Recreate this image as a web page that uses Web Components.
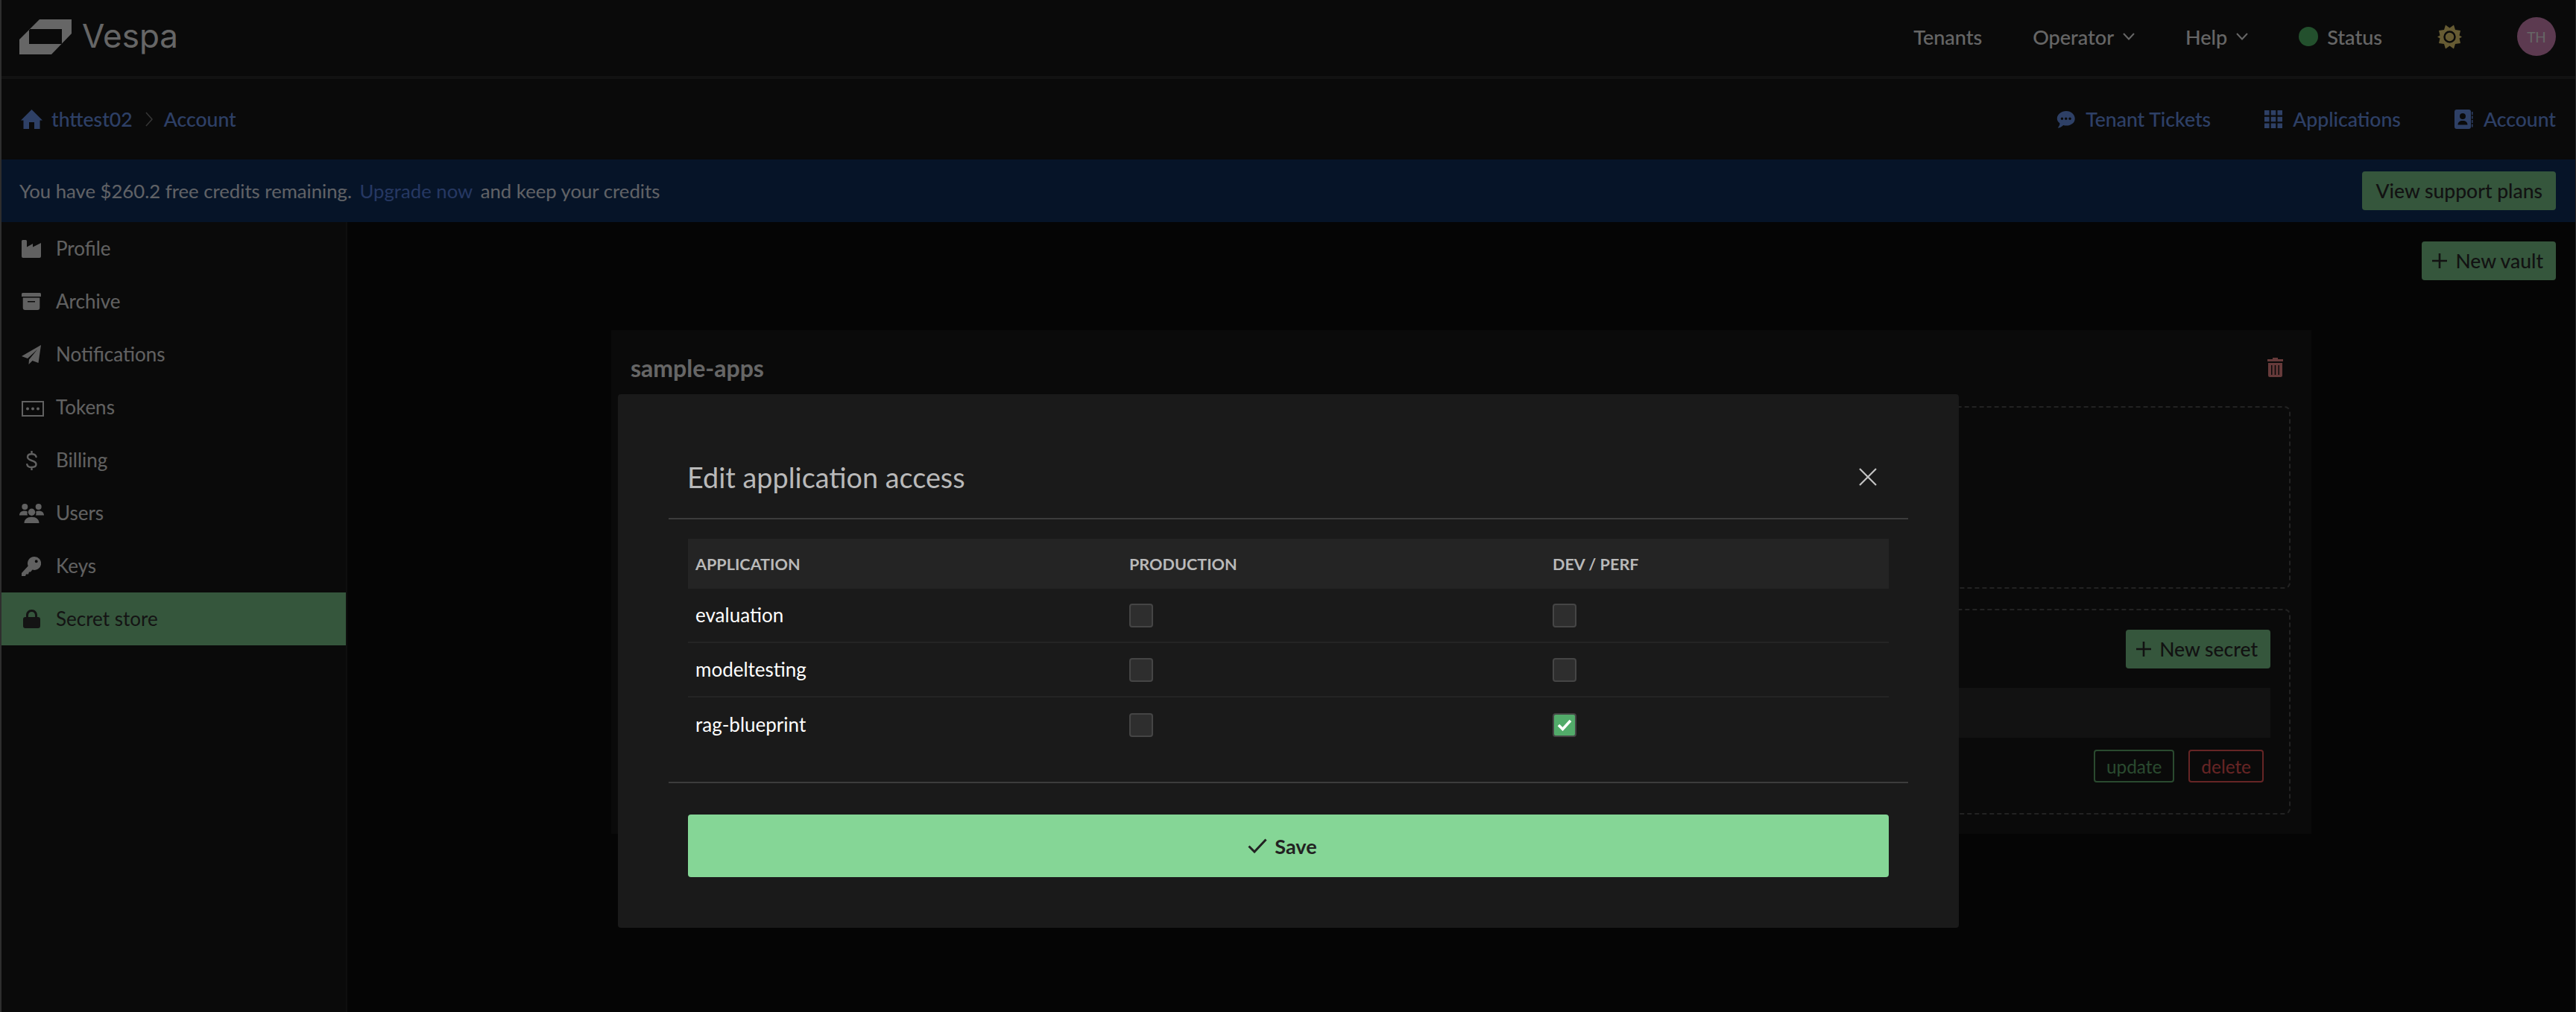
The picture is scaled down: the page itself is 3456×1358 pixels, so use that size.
<!DOCTYPE html>
<html lang="en">
<head>
<meta charset="UTF-8">
<title>Vespa Console - Secret store</title>
<style>
  html, body { margin: 0; height: 100%; background: #0d0d0d; }
  body { font-family: "Lato", "Liberation Sans", sans-serif; font-size: 26px; color: #fff; overflow: hidden; }
</style>
<script>
  const ICONS = {
    logo: { box: '0 0 70 47', svg: '<path fill-rule="evenodd" d="M27 0H70V19L43 47H0V27ZM13 13V33H57V13Z"/>' },
    chevron: { box: '0 0 16 10', svg: '<path d="M1 1L8 8.500L15 1" fill="none" stroke="currentColor" stroke-width="2"/>' },
    crumb: { box: '0 0 10 20', svg: '<path d="M1 1L9 10L1 19" fill="none" stroke="currentColor" stroke-width="1.500"/>' },
    sun: { box: '0 0 33 33', svg: '<path d="M11 0.500L16.500 4.500L22 0.500L24 7L31 8L29.500 14.500L33 16.500L29.500 18.500L31 25L24 26L22 32.500L16.500 28.500L11 32.500L9 26L2 25L3.500 18.500L0 16.500L3.500 14.500L2 8L9 7Z"/><circle cx="16.500" cy="16.500" r="7" fill="none" stroke="#1a1a1a" stroke-width="2.500"/>' },
    home: { box: '0 0 29 26', svg: '<path d="M14.500 0L29 14.500H25.500V26H18V17H11V26H3.500V14.500H0Z"/>' },
    chat: { box: '0 0 27 26', w: 25.5, h: 23, svg: '<path fill-rule="evenodd" d="M14 0C21 0 27 5 27 11.500C27 18 21 22 14 22C12.500 22 11 21.800 9.500 21.400C7 24 3.500 25.500 1 25.500C3 23.500 4.300 21 4 18.500C1.500 16.500 0 14 0 11.500C0 5 6.500 0 14 0ZM7.500 9.500A2 2 0 1 0 7.500 13.500A2 2 0 1 0 7.500 9.500ZM13.500 9.500A2 2 0 1 0 13.500 13.500A2 2 0 1 0 13.500 9.500ZM19.500 9.500A2 2 0 1 0 19.500 13.500A2 2 0 1 0 19.500 9.500Z"/>' },
    grid: { box: '0 0 24 24', svg: '<path d="M0 0H6.500V6.500H0ZM8.750 0H15.250V6.500H8.750ZM17.500 0H24V6.500H17.500ZM0 8.750H6.500V15.250H0ZM8.750 8.750H15.250V15.250H8.750ZM17.500 8.750H24V15.250H17.500ZM0 17.500H6.500V24H0ZM8.750 17.500H15.250V24H8.750ZM17.500 17.500H24V24H17.500Z"/>' },
    contact: { box: '0 0 25 26', svg: '<path fill-rule="evenodd" d="M3 0H19Q22 0 22 3V23Q22 26 19 26H3Q0 26 0 23V3Q0 0 3 0ZM11 5A4 4 0 1 0 11 13A4 4 0 1 0 11 5ZM4.500 20.500H17.500C17.500 17 15 15 11 15C7 15 4.500 17 4.500 20.500Z"/><path d="M23 3H24.500V7H23ZM23 8.500H24.500V12.500H23ZM23 14H24.500V18H23ZM23 19.500H24.500V23.500H23Z"/>' },
    industry: { box: '0 0 26 24', svg: '<path d="M0 1.500Q0 0 1.500 0H5.500Q7 0 7 1.500V9.500L15 5V9.500L26 4V22Q26 24 24 24H2Q0 24 0 22Z"/>' },
    archive: { box: '0 0 26 23', svg: '<path fill-rule="evenodd" d="M1.500 0H24.500Q26 0 26 1.500V5H0V1.500Q0 0 1.500 0ZM1.700 6.500H24.300V20Q24.300 23 21.300 23H4.700Q1.700 23 1.700 20ZM8 11V12.500H18V11Z"/>' },
    plane: { box: '0 0 26 26', svg: '<path d="M26 0L0 15L8 18L21 6L10 19.500L9.500 26L14.500 21L22.500 24Z"/>' },
    token: { box: '0 0 34 24', svg: '<rect x="5" y="4" width="28" height="19" fill="none" stroke="currentColor" stroke-width="2"/><circle cx="12" cy="13.500" r="2"/><circle cx="19" cy="13.500" r="2"/><circle cx="26" cy="13.500" r="2"/>' },
    dollar: { box: '0 0 15 26', svg: '<path d="M13.500 8C13 5.500 10.800 4.200 7.500 4.200C4.200 4.200 2 5.700 2 8.300C2 11 4.500 12 7.500 13C10.800 14 13.500 15 13.500 18C13.500 20.700 11 22 7.500 22C4 22 1.800 20.700 1.300 18.200M7.500 0.500V4M7.500 22V25.500" fill="none" stroke="currentColor" stroke-width="2.400" stroke-linecap="round"/>' },
    users: { box: '0 0 33 26', svg: '<circle cx="7.300" cy="4" r="4"/><circle cx="25.700" cy="4" r="4"/><circle cx="16.500" cy="11.300" r="4.700"/><path d="M0 15.500C0 11.500 3 9.500 7 9.500C8.500 9.500 9.800 9.800 10.800 10.500C10.300 12.500 10.500 14.200 11 15.500ZM33 15.500C33 11.500 30 9.500 26 9.500C24.500 9.500 23.200 9.800 22.200 10.500C22.700 12.500 22.500 14.200 22 15.500ZM6.500 26C6.500 21 10.500 17.800 16.500 17.800C22.500 17.800 26.500 21 26.500 26Z"/>' },
    key: { box: '0 0 26 26', svg: '<path fill-rule="evenodd" d="M17 0A9 9 0 1 1 14.500 17.600L12 20.500H10L9 23.500H6L5 26H0V22L8.700 12.500A9 9 0 0 1 17 0ZM19.700 4.300A2 2 0 1 0 19.700 8.300A2 2 0 1 0 19.700 4.300Z"/>' },
    lock: { box: '0 0 23 25', svg: '<path fill-rule="evenodd" d="M11.500 0C16 0 19 3.300 19 7.500V10H20Q23 10 23 13V22Q23 25 20 25H3Q0 25 0 22V13Q0 10 3 10H4V7.500C4 3.300 7 0 11.500 0ZM11.500 3C8.800 3 7 5 7 7.500V10H16V7.500C16 5 14.200 3 11.500 3Z"/>' },
    plus: { box: '0 0 20 20', svg: '<path d="M10 0V20M0 10H20" fill="none" stroke="currentColor" stroke-width="2.600"/>' },
    trash: { box: '0 0 21 26', svg: '<path fill-rule="evenodd" d="M7 0H14V2H21V5H0V2H7ZM1 7H20V23.500Q20 26 17.500 26H3.500Q1 26 1 23.500ZM5 10V23H6.500V10ZM9.700 10V23H11.300V10ZM14.500 10V23H16V10Z"/>' },
    close: { box: '0 0 24 24', svg: '<path d="M1 1L23 23M23 1L1 23" fill="none" stroke="currentColor" stroke-width="2.200"/>' },
    check: { box: '0 0 26 20', svg: '<path d="M1.500 10.500L9 18L24.500 1.500" fill="none" stroke="currentColor" stroke-width="3"/>' },
    tick: { box: '0 0 20 16', svg: '<path d="M2 8L7.500 13.500L18 2" fill="none" stroke="currentColor" stroke-width="3.600"/>' }
  };

  class VespaElement extends HTMLElement {
    connectedCallback() {
      if (this.shadowRoot) return;
      this.attachShadow({ mode: 'open' });
      this.shadowRoot.innerHTML = `<style>${this.constructor.css}</style>${this.render()}`;
    }
    render() { return '<slot></slot>'; }
  }

  class VIcon extends VespaElement {
    static css = `:host { display: inline-flex; flex: none; fill: currentColor; } svg { display: block; width: 100%; height: 100%; }`;
    render() {
      const icon = ICONS[this.getAttribute('name')];
      const [, , w, h] = icon.box.split(' ');
      this.style.width = (icon.w || w) + 'px';
      this.style.height = (icon.h || h) + 'px';
      return `<svg viewBox="${icon.box}" xmlns="http://www.w3.org/2000/svg">${icon.svg}</svg>`;
    }
  }

  class VApp extends VespaElement {
    static css = `
      :host { display: flex; flex-direction: column; box-sizing: border-box; position: relative; height: 100vh; border-left: 2px solid #2e2e2e; border-right: 1px solid #262626; overflow: hidden; }
      .body { display: flex; flex: 1; min-height: 0; }`;
    render() {
      return `<slot name="top"></slot><div class="body"><slot name="side"></slot><slot name="main"></slot></div><slot name="over"></slot>`;
    }
  }

  class VHeader extends VespaElement {
    static css = `
      :host { display: flex; align-items: center; justify-content: space-between; box-sizing: border-box; height: 106px; padding: 0 26px 4px 24px; background: #1a1a1a; border-bottom: 4px solid #2d2d2d; }
      .brand { display: flex; align-items: center; gap: 14px; color: #ffffff; }
      .name { font: 400 44px/1 "Inter", "Liberation Sans", sans-serif; color: #ffffff; margin-top: -3px; }
      .nav { display: flex; align-items: center; gap: 68px; font-size: 27px; }`;
    render() {
      return `<div class="brand"><v-icon name="logo"></v-icon><span class="name">Vespa</span></div><div class="nav"><slot></slot></div>`;
    }
  }

  class VTopLink extends VespaElement {
    static css = `
      :host { display: inline-flex; align-items: center; gap: 12px; font-weight: 500; color: #fff; }
      :host([bare]) { margin-left: 6px; }`;
  }

  class VStatusDot extends VespaElement {
    static css = `:host { display: block; width: 26px; height: 26px; border-radius: 50%; background: #57c870; }`;
    render() { return ''; }
  }

  class VAvatar extends VespaElement {
    static css = `:host { display: flex; align-items: center; justify-content: center; width: 52px; height: 52px; margin-left: 6px; border-radius: 50%; background: #e691c8; color: #fff; font-size: 19px; font-weight: 400; }`;
  }

  class VSubnav extends VespaElement {
    static css = `
      :host { display: flex; align-items: center; justify-content: space-between; box-sizing: border-box; height: 108px; padding: 0 26px 0 26px; background: #1a1a1a; color: #73a0ff; font-size: 26.600px; }
      .crumbs, .links { display: flex; align-items: center; }
      .links { gap: 72px; }`;
    render() {
      return `<div class="crumbs"><slot name="crumbs"></slot></div><div class="links"><slot></slot></div>`;
    }
  }

  class VSubLink extends VespaElement {
    static css = `:host { display: inline-flex; align-items: center; gap: 14px; color: #73a0ff; font-weight: 500; }`;
  }

  class VBanner extends VespaElement {
    static css = `
      :host { display: flex; align-items: center; justify-content: space-between; box-sizing: border-box; height: 84px; padding: 0 26px 0 24px; background: #0f3264; color: #f0f4ff; font-size: 25.700px; }`;
    render() {
      return `<div><slot></slot></div><slot name="action"></slot>`;
    }
  }

  class VButton extends VespaElement {
    static css = `
      :host { display: inline-flex; align-items: center; justify-content: center; box-sizing: border-box; height: 52px; padding: 0 18px; gap: 11px; border-radius: 4px; background: #85d696; color: #2e2e2e; font-size: 26.500px; font-weight: 500; white-space: nowrap; }
      :host([icon]) { padding: 0 17px 0 14px; }`;
  }

  class VOutlineButton extends VespaElement {
    static css = `
      :host { display: inline-flex; align-items: center; justify-content: center; box-sizing: border-box; height: 44px; padding: 0 15px; border: 2px solid currentColor; border-radius: 4px; font-size: 24.400px; }`;
  }

  class VSidebar extends VespaElement {
    static css = `:host { display: block; box-sizing: border-box; flex: none; width: 464px; background: #1a1a1a; border-right: 2px solid #232323; }`;
  }

  class VSideItem extends VespaElement {
    static css = `
      :host { display: flex; align-items: center; box-sizing: border-box; height: 71px; color: #f2f2f2; }
      :host([active]) { background: #85d696; color: #333; }
      .ico { display: flex; justify-content: center; width: 34px; margin: 0 16px 0 23px; }
      .label { margin-top: -2px; }`;
    render() {
      return `<span class="ico"><v-icon name="${this.getAttribute('icon')}"></v-icon></span><span class="label"><slot></slot></span>`;
    }
  }

  class VMain extends VespaElement {
    static css = `
      :host { display: flex; flex-direction: column; align-items: center; flex: 1; box-sizing: border-box; padding: 26px 26px 0 0; background: #0d0d0d; }
      .tools { display: flex; justify-content: flex-end; align-self: stretch; margin-bottom: 67px; }`;
    render() {
      return `<div class="tools"><slot name="tools"></slot></div><slot></slot>`;
    }
  }

  class VVault extends VespaElement {
    static css = `
      :host { display: block; box-sizing: border-box; width: 2281px; height: 676px; margin-right: -26px; padding: 23px 28px 26px 28px; background: #1a1a1a; }
      .head { display: flex; align-items: center; justify-content: space-between; height: 54px; margin: 0 10px 25px -2px; font-size: 32px; font-weight: 700; color: #fff; }
      .trash { color: #ff9191; }`;
    render() {
      return `<div class="head"><span>${this.getAttribute('name')}</span><v-icon class="trash" name="trash"></v-icon></div><slot></slot>`;
    }
  }

  class VDashed extends VespaElement {
    static css = `:host { display: block; box-sizing: border-box; border: 2px dashed #555; border-radius: 8px; margin-bottom: 27px; }`;
  }

  class VSecretList extends VespaElement {
    static css = `
      :host { display: flex; flex-direction: column; box-sizing: border-box; height: 100%; padding: 26px 25px 0; }
      .bar { display: flex; justify-content: flex-end; height: 52px; margin-bottom: 26px; }
      .thead { height: 67px; background: #2d2d2d; margin-bottom: 16px; }
      .row { display: flex; justify-content: flex-end; gap: 19px; padding-right: 9px; color: #fff; }`;
    render() {
      return `<div class="bar"><slot name="bar"></slot></div><div class="thead"></div><div class="row"><slot></slot></div>`;
    }
  }

  class VOverlay extends VespaElement {
    static css = `:host { position: absolute; inset: 0; display: flex; justify-content: center; background: rgba(0, 0, 0, .6); }`;
  }

  class VModal extends VespaElement {
    static css = `
      :host { display: block; box-sizing: border-box; width: 1799px; height: 716px; margin-top: 529px; padding: 0 68px; background: #1a1a1a; border-radius: 4px; }
      .head { display: flex; align-items: center; justify-content: space-between; box-sizing: border-box; height: 168px; padding: 57px 42px 0 25px; border-bottom: 2px solid #3c3c3c; }
      .title { font-size: 37.800px; font-weight: 400; color: #b9b9b9; }
      .close { color: #c4c4c4; margin-top: -2px; }
      .content { height: 354px; box-sizing: border-box; padding: 26px 26px 0; border-bottom: 2px solid #3c3c3c; }
      .foot { padding: 42px 26px 0; }`;
    render() {
      return `<div class="head"><span class="title">${this.getAttribute('heading')}</span><v-icon class="close" name="close"></v-icon></div>
        <div class="content"><slot></slot></div><div class="foot"><slot name="foot"></slot></div>`;
    }
  }

  class VAccessHead extends VespaElement {
    static css = `
      :host { display: grid; grid-template-columns: 582px 568px 1fr; align-items: center; height: 67px; background: #242424; color: #b9b9b9; font-size: 21.600px; font-weight: 700; }
      ::slotted(span) { padding-left: 10px; }`;
  }

  class VAccessRow extends VespaElement {
    static css = `
      :host { display: grid; grid-template-columns: 582px 568px 1fr; align-items: center; box-sizing: border-box; height: 73px; border-bottom: 2px solid #242424; color: #fff; }
      :host([last]) { border-bottom: none; }
      ::slotted(*) { margin-left: 10px; }
      ::slotted(span) { margin-top: -2px; }`;
  }

  class VCheckbox extends VespaElement {
    static css = `
      :host { display: flex; align-items: center; justify-content: center; box-sizing: border-box; width: 32px; height: 32px; background: #2e2e2e; border: 2px solid #454545; border-radius: 4px; color: #fff; }
      :host([checked]) { background: #52ab6a; }`;
    render() {
      return this.hasAttribute('checked') ? '<v-icon name="tick"></v-icon>' : '';
    }
  }

  class VSaveButton extends VespaElement {
    static css = `
      :host { display: flex; align-items: center; justify-content: center; gap: 10px; box-sizing: border-box; height: 84px; padding-right: 16px; border-radius: 4px; background: #85d696; color: #222; font-size: 27px; font-weight: 700; }`;
    render() {
      return `<v-icon name="check"></v-icon><slot></slot>`;
    }
  }

  const elements = {
    'v-icon': VIcon, 'v-app': VApp, 'v-header': VHeader, 'v-top-link': VTopLink, 'v-status-dot': VStatusDot,
    'v-avatar': VAvatar, 'v-subnav': VSubnav, 'v-sub-link': VSubLink, 'v-banner': VBanner, 'v-button': VButton,
    'v-outline-button': VOutlineButton, 'v-sidebar': VSidebar, 'v-side-item': VSideItem, 'v-main': VMain,
    'v-vault': VVault, 'v-dashed': VDashed, 'v-secret-list': VSecretList, 'v-overlay': VOverlay, 'v-modal': VModal,
    'v-access-head': VAccessHead, 'v-access-row': VAccessRow, 'v-checkbox': VCheckbox, 'v-save-button': VSaveButton
  };
  for (const [tag, cls] of Object.entries(elements)) customElements.define(tag, cls);
</script>
</head>
<body>
<v-app>
  <div slot="top">
    <v-header>
      <v-top-link>Tenants</v-top-link>
      <v-top-link>Operator <v-icon name="chevron"></v-icon></v-top-link>
      <v-top-link>Help <v-icon name="chevron"></v-icon></v-top-link>
      <v-top-link><v-status-dot></v-status-dot> Status</v-top-link>
      <v-top-link bare style="color:#ffe47f"><v-icon name="sun"></v-icon></v-top-link>
      <v-avatar>TH</v-avatar>
    </v-header>
    <v-subnav>
      <div slot="crumbs" style="display:flex;align-items:center;gap:12px">
        <v-sub-link style="gap:12px"><v-icon name="home"></v-icon>thttest02</v-sub-link>
        <v-icon name="crumb" style="margin:0 3px 0 5px;color:#888"></v-icon>
        <v-sub-link>Account</v-sub-link>
      </div>
      <v-sub-link><v-icon name="chat"></v-icon>Tenant Tickets</v-sub-link>
      <v-sub-link><v-icon name="grid"></v-icon>Applications</v-sub-link>
      <v-sub-link><v-icon name="contact"></v-icon>Account</v-sub-link>
    </v-subnav>
    <v-banner>
      You have $260.2 free credits remaining. <span style="color:#5f8cf5;margin:0 4px">Upgrade now</span> and keep your credits
      <v-button slot="action">View support plans</v-button>
    </v-banner>
  </div>
  <v-sidebar slot="side">
    <v-side-item icon="industry">Profile</v-side-item>
    <v-side-item icon="archive">Archive</v-side-item>
    <v-side-item icon="plane">Notifications</v-side-item>
    <v-side-item icon="token">Tokens</v-side-item>
    <v-side-item icon="dollar">Billing</v-side-item>
    <v-side-item icon="users">Users</v-side-item>
    <v-side-item icon="key">Keys</v-side-item>
    <v-side-item icon="lock" active>Secret store</v-side-item>
  </v-sidebar>
  <v-main slot="main">
    <v-button slot="tools" icon><v-icon name="plus"></v-icon>New vault</v-button>
    <v-vault name="sample-apps">
      <v-dashed style="height:245px"></v-dashed>
      <v-dashed style="height:276px;margin:0">
        <v-secret-list>
          <v-button slot="bar" icon><v-icon name="plus"></v-icon>New secret</v-button>
          <v-outline-button style="color:#69b976">update</v-outline-button>
          <v-outline-button style="color:#ff5c5c">delete</v-outline-button>
        </v-secret-list>
      </v-dashed>
    </v-vault>
  </v-main>
  <v-overlay slot="over">
    <v-modal heading="Edit application access">
      <v-access-head><span>APPLICATION</span><span>PRODUCTION</span><span>DEV / PERF</span></v-access-head>
      <v-access-row><span>evaluation</span><v-checkbox></v-checkbox><v-checkbox></v-checkbox></v-access-row>
      <v-access-row><span>modeltesting</span><v-checkbox></v-checkbox><v-checkbox></v-checkbox></v-access-row>
      <v-access-row last><span>rag-blueprint</span><v-checkbox></v-checkbox><v-checkbox checked></v-checkbox></v-access-row>
      <v-save-button slot="foot">Save</v-save-button>
    </v-modal>
  </v-overlay>
</v-app>
</body>
</html>
